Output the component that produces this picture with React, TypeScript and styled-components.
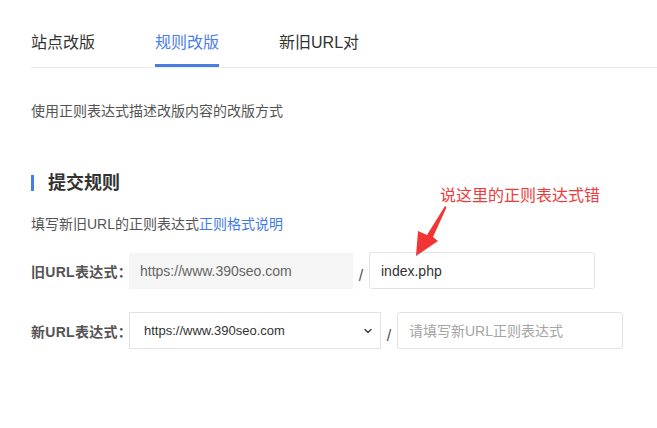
import React from 'react';
import styled, { createGlobalStyle } from 'styled-components';
import { ChevronDown } from 'lucide-react';

const GlobalStyle = createGlobalStyle`
  html, body {
    margin: 0;
    padding: 0;
    background: #fff;
  }
  body {
    font-family: "Liberation Sans", "Noto Sans CJK SC", sans-serif;
    color: #333;
  }
`;

const Page = styled.div`
  position: relative;
  width: 657px;
  height: 428px;
  padding-left: 31px;
  box-sizing: border-box;
  overflow: hidden;
`;

const TabBar = styled.div`
  display: flex;
  border-bottom: 1px solid #ececec;
`;

const Tab = styled.div<{ $active?: boolean }>`
  margin-right: 60px;
  padding: 26px 0 4px;
  font-size: 16px;
  line-height: 34px;
  color: ${({ $active }) => ($active ? '#4b7ee6' : '#333')};
  border-bottom: 3px solid ${({ $active }) => ($active ? '#4a7de2' : 'transparent')};
`;

const Intro = styled.p`
  margin: 33px 0 0;
  font-size: 14px;
  line-height: 20px;
  color: #555;
`;

const SectionTitle = styled.h3`
  position: relative;
  margin: 50px 0 0;
  padding-left: 17px;
  font-size: 18px;
  line-height: 24px;
  font-weight: bold;
  color: #333;

  &::before {
    content: '';
    position: absolute;
    left: 0;
    top: 4px;
    width: 3px;
    height: 16px;
    background: #3d80ee;
  }
`;

const Hint = styled.p`
  margin: 19px 0 0;
  font-size: 14px;
  line-height: 20px;
  color: #555;
`;

const Link = styled.a`
  color: #3f7be6;
  text-decoration: none;
`;

const FormRow = styled.div<{ $gap: number }>`
  display: flex;
  align-items: center;
  margin-top: ${({ $gap }) => $gap}px;
`;

const Label = styled.label`
  width: 98px;
  font-size: 14px;
  font-weight: bold;
  color: #555;
  white-space: nowrap;
  letter-spacing: 0.3px;
`;

const ReadOnlyField = styled.div`
  width: 224px;
  height: 36px;
  padding-left: 11px;
  box-sizing: border-box;
  display: flex;
  align-items: center;
  background: #f5f5f5;
  font-size: 14px;
  color: #666;
`;

const Slash = styled.span`
  width: 16px;
  padding-top: 11px;
  text-align: center;
  font-size: 16px;
  color: #555;
`;

const TextInput = styled.input`
  width: 226px;
  height: 37px;
  padding: 0 11px;
  box-sizing: border-box;
  border: 1px solid #e3e3e3;
  border-radius: 3px;
  outline: none;
  font-family: inherit;
  font-size: 14px;
  color: #333;

  &::placeholder {
    color: #a5a5a5;
  }
`;

const SelectWrap = styled.div`
  position: relative;
  width: 252px;
  height: 37px;
`;

const Select = styled.select`
  width: 100%;
  height: 100%;
  padding-left: 14px;
  box-sizing: border-box;
  border: 1px solid #e3e3e3;
  border-radius: 0;
  background: #fff;
  appearance: none;
  outline: none;
  font-family: inherit;
  font-size: 13px;
  color: #333;
`;

const SelectArrow = styled(ChevronDown)`
  position: absolute;
  right: 7px;
  top: 13px;
  color: #444;
  pointer-events: none;
`;

const Note = styled.div`
  position: absolute;
  left: 414px;
  top: 184px;
`;

const NoteText = styled.span`
  position: absolute;
  left: 26px;
  top: 1px;
  font-size: 16px;
  line-height: 22px;
  color: #f03a3a;
  white-space: nowrap;
`;

const NoteArrow = styled.svg`
  position: absolute;
  left: 0;
  top: 0;
`;

export default function App() {
  return (
    <>
      <GlobalStyle />
      <Page>
        <TabBar>
          <Tab>站点改版</Tab>
          <Tab $active>规则改版</Tab>
          <Tab>新旧URL对</Tab>
        </TabBar>

        <Intro>使用正则表达式描述改版内容的改版方式</Intro>

        <SectionTitle>提交规则</SectionTitle>
        <Hint>
          填写新旧URL的正则表达式<Link href="#">正则格式说明</Link>
        </Hint>

        <FormRow $gap={18}>
          <Label>旧URL表达式：</Label>
          <ReadOnlyField>https://www.390seo.com</ReadOnlyField>
          <Slash>/</Slash>
          <TextInput defaultValue="index.php" />
        </FormRow>

        <FormRow $gap={23}>
          <Label>新URL表达式：</Label>
          <SelectWrap>
            <Select defaultValue="https://www.390seo.com">
              <option>https://www.390seo.com</option>
            </Select>
            <SelectArrow size={12} strokeWidth={3} />
          </SelectWrap>
          <Slash>/</Slash>
          <TextInput placeholder="请填写新URL正则表达式" />
        </FormRow>

        <Note>
          <NoteText>说这里的正则表达式错</NoteText>
          <NoteArrow width="40" height="80" viewBox="0 0 40 80">
            {/* thin shaft widening into a wedge head, pointing down-left */}
            <polygon points="31,22 32.5,23.5 19,53 24,57 2,72 4,47 13,51" fill="#f23434" />
          </NoteArrow>
        </Note>
      </Page>
    </>
  );
}
